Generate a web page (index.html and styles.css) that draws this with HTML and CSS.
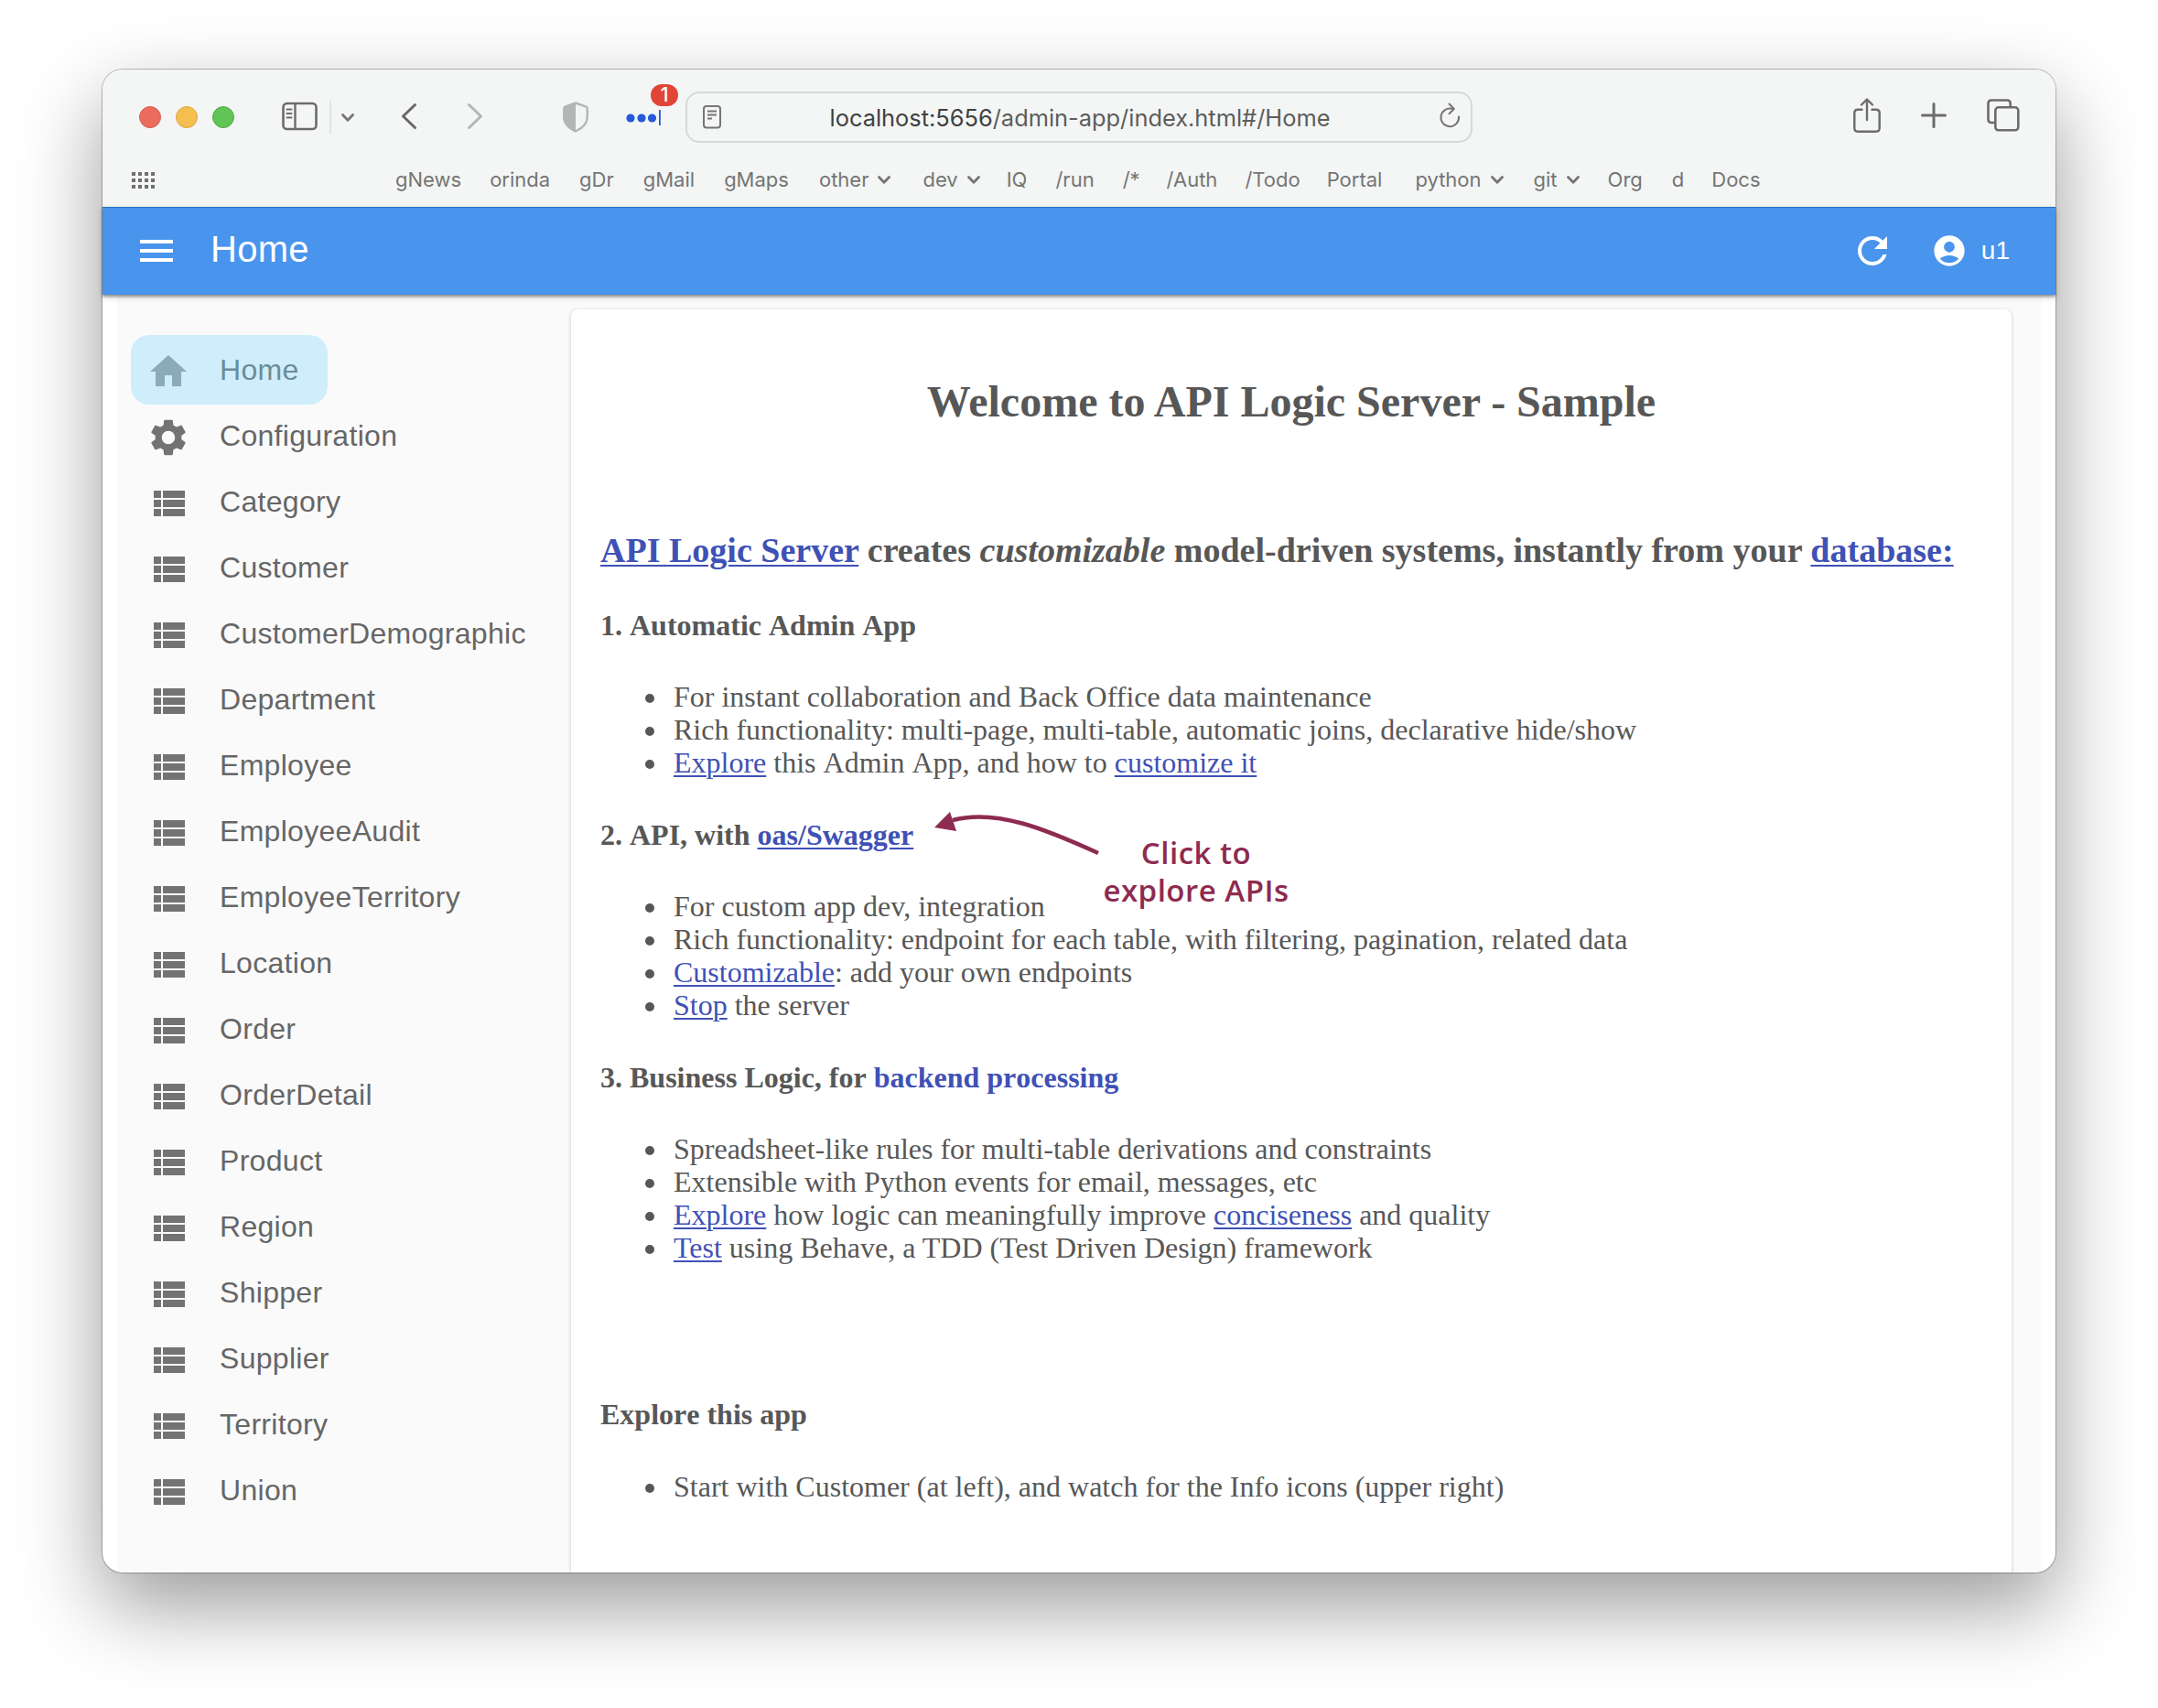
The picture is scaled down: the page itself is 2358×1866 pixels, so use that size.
FILE: index.html
```html
<!DOCTYPE html>
<html lang="en">
<head>
<meta charset="utf-8">
<title>Home</title>
<link rel="stylesheet" href="styles.css">
</head>
<body>
<svg width="0" height="0" class="defs">
  <symbol id="list" viewBox="0 0 24 24"><path d="M4 14h4v-4H4v4zm0 5h4v-4H4v4zM4 9h4V5H4v4zm5 5h12v-4H9v4zm0 5h12v-4H9v4zM9 5v4h12V5H9z"/></symbol>
  <symbol id="chev" viewBox="0 0 14 9"><path d="M1.5 1.5 7 7.2l5.500-5.700" fill="none" stroke="currentColor" stroke-width="2.800" stroke-linecap="round" stroke-linejoin="round"/></symbol>
</svg>
<div class="window">
  <div class="toolbar">
    <span class="light red"></span><span class="light yellow"></span><span class="light green"></span>
    <svg class="i-sidebar" width="40" height="32" viewBox="0 0 40 32" fill="none" stroke="#6b6c6b"><rect x="1.500" y="2" width="36" height="28" rx="4" stroke-width="2.600"/><path d="M14.500 2v28" stroke-width="2.400"/><path d="M5.500 8.500h5M5.500 13h5M5.500 17.500h5" stroke-width="2" stroke-linecap="round"/></svg>
    <span class="divider"></span>
    <svg class="i-down" width="14" height="9"><use href="#chev"/></svg>
    <svg class="i-back" width="18" height="30" viewBox="0 0 18 30" fill="none" stroke="#666766" stroke-width="3" stroke-linecap="round" stroke-linejoin="round"><path d="M15.500 2.500 2.500 15l13 12.500"/></svg>
    <svg class="i-fwd" width="18" height="30" viewBox="0 0 18 30" fill="none" stroke="#b4b6b5" stroke-width="3" stroke-linecap="round" stroke-linejoin="round"><path d="M2.500 2.500 15.500 15l-13 12.500"/></svg>
    <svg class="i-shield" width="28" height="34" viewBox="0 0 28 34"><path d="M14 1.500 25.500 5.500Q26.700 6 26.700 7.500V17c0 7-5 12-12.700 15.500C6.300 29 1.300 24 1.300 17V7.500Q1.300 6 2.500 5.500Z" fill="none" stroke="#b4b6b5" stroke-width="2.400"/><path d="M14 .5 2 4.800Q.3 5.500.3 7.500V17C.3 24.500 5.500 30 14 33.500Z" fill="#b4b6b5"/></svg>
    <span class="pwd">
      <svg width="40" height="20" viewBox="0 0 40 20" fill="#2559d9"><circle cx="5" cy="11" r="4.600"/><circle cx="17" cy="11" r="4.600"/><circle cx="28.500" cy="11" r="4.600"/><path d="M36 2h1.800v17H36z"/></svg>
      <span class="badge">1</span>
    </span>
    <div class="url">
      <svg class="i-reader" width="20" height="26" viewBox="0 0 20 26" fill="none" stroke="#747574" stroke-width="2"><rect x="1" y="1" width="18" height="23.500" rx="3"/><path d="M5 6.500h10M5 10.500h10M5 14.500h5"/></svg>
      <span class="addr"><b>localhost:5656</b>/admin-app/index.html#/Home</span>
      <svg class="i-reload" width="24" height="28" viewBox="0 0 24 28" fill="none" stroke="#747574" stroke-width="2" stroke-linecap="round" stroke-linejoin="round"><path d="M14.800 6.900A9.800 9.800 0 1 0 22 15.500M11.500 1.500 16.800 7l-5.300 5.200"/></svg>
    </div>
    <svg class="i-share" width="30" height="38" viewBox="0 0 30 38" fill="none" stroke="#6b6c6b" stroke-width="2.400" stroke-linecap="round" stroke-linejoin="round"><path d="M9.500 12.800H5Q1.300 12.800 1.300 16.500V33Q1.300 36.700 5 36.700H25Q28.700 36.700 28.700 33V16.500Q28.700 12.800 25 12.800H20.500M15 24V1.800M9 7.500 15 1.500l6 6"/></svg>
    <svg class="i-plus" width="28" height="28" viewBox="0 0 28 28" stroke="#6b6c6b" stroke-width="3" stroke-linecap="round"><path d="M14 1.500v25M1.500 14h25"/></svg>
    <svg class="i-tabs" width="36" height="36" viewBox="0 0 36 36" fill="none" stroke="#6b6c6b" stroke-width="2.600"><rect x="9.300" y="9.300" width="25" height="25" rx="3.500"/><path d="M9 26H5Q1.500 26 1.500 22.500V5Q1.500 1.500 5 1.500H22Q25.700 1.500 25.700 5V9"/></svg>
  </div>
  <div class="bookmarks">
    <svg class="i-grid" width="25" height="18" viewBox="0 0 25 18" fill="#6f706f"><path d="M0 0h4v4H0zM7 0h4v4H7zM14 0h4v4h-4zM21 0h4v4h-4zM0 7h4v4H0zM7 7h4v4H7zM14 7h4v4h-4zM21 7h4v4h-4zM0 14h4v4H0zM7 14h4v4H7zM14 14h4v4h-4zM21 14h4v4h-4z"/></svg>
    <nav class="marks"><span>gNews</span><span>orinda</span><span>gDr</span><span>gMail</span><span>gMaps</span><span class="folder">other<svg width="14" height="9"><use href="#chev"/></svg></span><span class="folder">dev<svg width="14" height="9"><use href="#chev"/></svg></span><span>IQ</span><span>/run</span><span>/*</span><span>/Auth</span><span>/Todo</span><span>Portal</span><span class="folder">python<svg width="14" height="9"><use href="#chev"/></svg></span><span class="folder">git<svg width="14" height="9"><use href="#chev"/></svg></span><span>Org</span><span>d</span><span>Docs</span></nav>
  </div>
  <header class="appbar">
    <svg class="i-menu" width="48" height="48" viewBox="0 0 24 24"><path d="M3 18h18v-2H3v2zm0-5h18v-2H3v2zm0-7v2h18V6H3z"/></svg>
    <span class="apptitle">Home</span>
    <svg class="i-refresh" width="48" height="48" viewBox="0 0 24 24"><path d="M17.650 6.350C16.200 4.900 14.210 4 12 4c-4.420 0-7.990 3.580-7.990 8s3.570 8 7.990 8c3.730 0 6.840-2.550 7.730-6h-2.080c-.82 2.330-3.040 4-5.650 4-3.310 0-6-2.690-6-6s2.690-6 6-6c1.660 0 3.140.69 4.220 1.780L13 11h7V4l-2.350 2.350z"/></svg>
    <svg class="i-user" width="40" height="40" viewBox="0 0 24 24"><path d="M12 2C6.480 2 2 6.480 2 12s4.480 10 10 10 10-4.480 10-10S17.520 2 12 2zm0 4c1.930 0 3.500 1.570 3.500 3.500S13.930 13 12 13s-3.500-1.570-3.500-3.500S10.070 6 12 6zm0 14c-2.030 0-4.430-.82-6.140-2.880C7.550 15.800 9.680 15 12 15s4.450.8 6.140 2.120C16.430 19.180 14.030 20 12 20z"/></svg>
    <span class="user">u1</span>
  </header>
  <div class="content">
    <nav class="side">
      <a class="item active"><svg viewBox="0 0 24 24"><path d="M10 20v-6h4v6h5v-8h3L12 3 2 12h3v8z"/></svg><span>Home</span></a>
      <a class="item"><svg viewBox="0 0 24 24"><path d="M19.140 12.940c.04-.3.06-.61.06-.94 0-.32-.02-.64-.07-.94l2.030-1.580c.18-.14.23-.41.12-.61l-1.920-3.320c-.12-.22-.37-.29-.59-.22l-2.390.96c-.5-.38-1.030-.7-1.620-.94l-.36-2.540c-.04-.24-.24-.41-.48-.41h-3.840c-.24 0-.43.17-.47.41l-.36 2.540c-.59.24-1.130.57-1.620.94l-2.390-.96c-.22-.08-.47 0-.59.22L2.740 8.870c-.12.21-.08.47.12.61l2.030 1.580c-.05.3-.09.63-.09.94s.02.64.07.94l-2.030 1.580c-.18.14-.23.41-.12.61l1.920 3.320c.12.22.37.29.59.22l2.390-.96c.5.38 1.030.7 1.620.94l.36 2.540c.05.24.24.41.48.41h3.840c.24 0 .44-.17.47-.41l.36-2.540c.59-.24 1.130-.56 1.620-.94l2.390.96c.22.08.47 0 .59-.22l1.920-3.320c.12-.22.07-.47-.12-.61l-2.010-1.580zM12 15.600c-1.980 0-3.600-1.620-3.600-3.600s1.620-3.600 3.600-3.600 3.600 1.620 3.600 3.600-1.620 3.600-3.600 3.600z"/></svg><span>Configuration</span></a>
      <a class="item"><svg><use href="#list"/></svg><span>Category</span></a>
      <a class="item"><svg><use href="#list"/></svg><span>Customer</span></a>
      <a class="item"><svg><use href="#list"/></svg><span>CustomerDemographic</span></a>
      <a class="item"><svg><use href="#list"/></svg><span>Department</span></a>
      <a class="item"><svg><use href="#list"/></svg><span>Employee</span></a>
      <a class="item"><svg><use href="#list"/></svg><span>EmployeeAudit</span></a>
      <a class="item"><svg><use href="#list"/></svg><span>EmployeeTerritory</span></a>
      <a class="item"><svg><use href="#list"/></svg><span>Location</span></a>
      <a class="item"><svg><use href="#list"/></svg><span>Order</span></a>
      <a class="item"><svg><use href="#list"/></svg><span>OrderDetail</span></a>
      <a class="item"><svg><use href="#list"/></svg><span>Product</span></a>
      <a class="item"><svg><use href="#list"/></svg><span>Region</span></a>
      <a class="item"><svg><use href="#list"/></svg><span>Shipper</span></a>
      <a class="item"><svg><use href="#list"/></svg><span>Supplier</span></a>
      <a class="item"><svg><use href="#list"/></svg><span>Territory</span></a>
      <a class="item"><svg><use href="#list"/></svg><span>Union</span></a>
    </nav>
    <main class="paper">
      <h2>Welcome to API Logic Server - Sample</h2>
      <h3><a>API Logic Server</a> creates <i>customizable</i> model-driven systems, instantly from your <a>database:</a></h3>
      <h4>1. Automatic Admin App</h4>
      <ul>
        <li>For instant collaboration and Back Office data maintenance</li>
        <li>Rich functionality: multi-page, multi-table, automatic joins, declarative hide/show</li>
        <li class="loose"><a>Explore</a> this Admin App, and how to <a>customize it</a></li>
      </ul>
      <h4>2. API, with <a>oas/Swagger</a></h4>
      <ul>
        <li>For custom app dev, integration</li>
        <li>Rich functionality: endpoint for each table, with filtering, pagination, related data</li>
        <li><a>Customizable</a>: add your own endpoints</li>
        <li><a>Stop</a> the server</li>
      </ul>
      <h4>3. Business Logic, for <a class="plain">backend processing</a></h4>
      <ul>
        <li>Spreadsheet-like rules for multi-table derivations and constraints</li>
        <li>Extensible with Python events for email, messages, etc</li>
        <li><a>Explore</a> how logic can meaningfully improve <a>conciseness</a> and quality</li>
        <li><a>Test</a> using Behave, a TDD (Test Driven Design) framework</li>
      </ul>
      <h4 class="last">Explore this app</h4>
      <ul>
        <li>Start with Customer (at left), and watch for the Info icons (upper right)</li>
      </ul>
    </main>
  </div>
  <div class="note">
    <svg width="184" height="52" viewBox="0 0 184 52"><path d="M20 13C68 0 124 24 179 49" fill="none" stroke="#8e2b50" stroke-width="4.500"/><path d="M0 21 17 4l7 21z" fill="#8e2b50"/></svg>
    <p>Click to<br>explore APIs</p>
  </div>
</div>
</body>
</html>
```
FILE: styles.css
```css
* { box-sizing: border-box; }
body { margin: 0; width: 2358px; height: 1866px; background: #fff; overflow: hidden; font-family: "Liberation Sans", Arial, sans-serif; display: flex; }
svg { display: block; flex: none; overflow: visible; }
.defs { position: absolute; }
.window { position: relative; width: 2134px; height: 1642px; margin: 76px 0 0 112px; border-radius: 22px; background: #fff; display: flex; flex-direction: column; box-shadow: 0 0 0 1px rgba(0,0,0,.25), 0 36px 90px rgba(0,0,0,.4); }
.toolbar { height: 104px; flex: none; display: flex; align-items: center; padding-left: 40px; background: #f4f6f5; border-radius: 22px 22px 0 0; }
.light { width: 24px; height: 24px; border-radius: 50%; margin-right: 16px; border: 1px solid; }
.red { background: #ec6b5f; border-color: #d75a50; }
.yellow { background: #f5bf50; border-color: #dba73e; }
.green { background: #61c555; border-color: #50ac42; margin-right: 0; }
.i-sidebar { margin: -2px 0 0 52px; }
.divider { width: 2px; height: 36px; background: #e2e4e3; margin-left: 12px; }
.i-down { margin-left: 11px; color: #747574; }
.i-back { margin: -2px 0 0 51px; }
.i-fwd { margin: -2px 0 0 54px; }
.i-shield { margin-left: 87px; }
.pwd { position: relative; margin-left: 41px; width: 40px; }
.badge { position: absolute; left: 27px; top: -26px; width: 30px; height: 24px; border-radius: 12px; background: #e14538; color: #fff; font: 500 21px/24px Inter, sans-serif; text-align: center; }
.url { width: 860px; height: 56px; margin-left: 25px; border: 2px solid #d7d9d8; border-radius: 15px; display: flex; align-items: center; padding: 0 11px 0 17px; }
.addr { flex: 1; text-align: center; font: 400 25.400px/30px Inter, sans-serif; color: #5c5d5c; white-space: nowrap; padding-top: 2px; }
.addr b { font-weight: 400; color: #3f403f; }
.i-reload { margin-top: -4px; }
.i-share { margin: -4px 0 0 416px; }
.i-plus { margin: -4px 0 0 44px; }
.i-tabs { margin: -4px 0 0 44px; }
.bookmarks { height: 46px; flex: none; display: flex; align-items: center; padding: 0 0 14px 32px; background: #f4f6f5; }
.i-grid { margin-top: 2px; }
.marks { display: flex; gap: 32px; margin-left: 263px; font: 400 22px/34px Inter, sans-serif; color: #747574; }
.folder { display: flex; align-items: center; gap: 10px; }
.marks :nth-child(2) { margin-left: -1px; }
.marks :nth-child(6) { margin-left: 1px; }
.marks :nth-child(7) { margin-left: 3px; }
.marks :nth-child(8) { margin-left: -3px; }
.marks :nth-child(9) { margin-left: -1px; }
.marks :nth-child(10) { margin-left: -1px; }
.marks :nth-child(11) { margin-left: -3px; }
.marks :nth-child(12) { margin-left: -2px; }
.marks :nth-child(13) { margin-left: -3px; }
.marks :nth-child(14) { margin-left: 4px; }
.marks :nth-child(15) { margin-left: 1px; }
.marks :nth-child(16) { margin-left: -1px; }
.marks :nth-child(18) { margin-left: -2px; }
.marks .folder svg { margin: 1px 0 0; }
.appbar { position: relative; z-index: 1; height: 96px; flex: none; background: #4994ec; border-top: 1px solid #2c72c7; display: flex; align-items: center; padding: 0 0 1px 35px; color: #fff; fill: #fff; box-shadow: 0 2px 3px rgba(0,0,0,.4), 0 3px 8px rgba(0,0,0,.12); }
.apptitle { font-size: 40px; line-height: 48px; letter-spacing: .3px; margin: -4px 0 0 35px; }
.i-refresh { margin-left: auto; }
.i-user { margin-left: 40px; }
.user { font-size: 28px; margin: 0 50px 0 15px; }
.content { flex: 1; min-height: 0; margin: 0 16px; background: #fafafa; display: flex; overflow: hidden; border-radius: 0 0 6px 6px; }
.side { width: 496px; padding: 44px 0 0 15px; display: flex; flex-direction: column; align-items: flex-start; }
.item { height: 72px; padding: 0 21px 0 17px; display: flex; align-items: center; gap: 32px; font-size: 32px; letter-spacing: .3px; color: #666; flex: none; }
.item span { padding-bottom: 3px; }
.item svg { width: 48px; height: 48px; fill: #737373; }
.active { height: 76px; padding-top: 4px; padding-right: 31px; background: #cfedfb; border-radius: 20px; color: #6b8c98; }
.active svg { fill: #8babb9; }
.paper { width: 1574px; margin-top: 16px; background: #fff; border-radius: 8px 8px 0 0; box-shadow: 0 1px 4px rgba(0,0,0,.2); padding: 71px 32px 0; font-family: "Liberation Serif", "Times New Roman", serif; font-size: 32px; line-height: 36px; color: #575757; }
h2 { margin: 0; font-size: 48px; line-height: 60px; text-align: center; }
h3 { margin: 111px 0 0; font-size: 38.030px; line-height: 42px; white-space: nowrap; }
h4 { margin: 42.500px 0; font-size: 32px; line-height: 36px; font-kerning: none; }
ul { margin: 0 0 42.500px; padding-left: 80px; list-style: none; }
li::before { content: ""; display: inline-block; width: 10px; height: 10px; border-radius: 50%; background: #575757; margin: 0 21px 4px -31px; }
.loose { font-kerning: none; }
.last { margin-top: 146px; }
.paper a { color: #3f51b5; text-decoration: underline; text-decoration-thickness: 2px; text-underline-offset: 3px; }
.paper .plain { text-decoration: none; }
.note { position: absolute; z-index: 2; left: 909px; top: 807px; color: #8e2b50; }
.note p { margin: -24px 0 0 184px; width: 204px; text-align: center; white-space: nowrap; letter-spacing: .5px; font: 600 33px/41px "Open Sans", sans-serif; }
```
